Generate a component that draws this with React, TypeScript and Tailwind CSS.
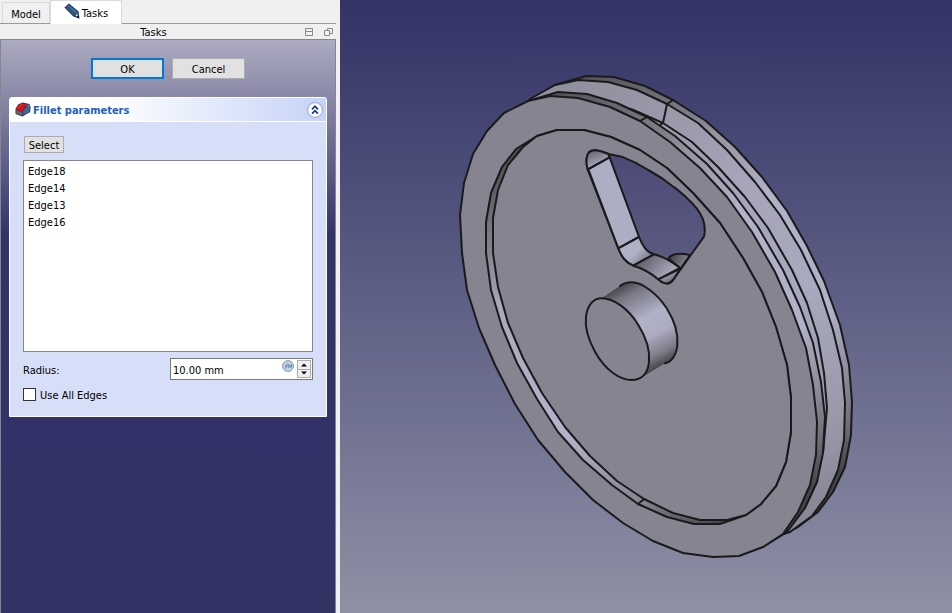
import { useState } from "react";

const EDGES = ["Edge18", "Edge14", "Edge13", "Edge16"];

function PencilIcon() {
  return (
    <svg viewBox="0 0 16 16" className="mb-1 h-4 w-4" aria-hidden="true">
      <path d="M0.4 4.6 L5 0.4 L14.6 8.6 L15.4 15.4 L9.4 13.4 Z" fill="#1f3752" />
      <path d="M1.4 4.7 L5 1.4 L13.8 9 L9.8 12.6 Z" fill="#2f567f" />
      <path d="M4.4 2.8 L12.4 9.6" stroke="#456f9b" strokeWidth="1.4" />
      <path d="M11 12.4 L13.4 10.2 L14 12.6 L12.8 13.6 Z" fill="#b4bfc9" />
      <path d="M12.4 14.2 L14.5 12.4 L15.4 15.4 Z" fill="#111c2b" />
    </svg>
  );
}

function FilletIcon() {
  return (
    <svg viewBox="0 0 16 15" className="h-[15px] w-4" aria-hidden="true">
      <path d="M0.5 7 L3 2.5 L7.5 0.5 L14.4 2 L15.6 5 L15.2 10 L7.5 14.5 L0.5 12 Z" fill="#26364c" />
      <path d="M8.2 9 L10.5 5.4 L14.8 3.8 L14.6 9.6 L8.2 13.4 Z" fill="#3c6693" />
      <path d="M11 4.6 L13 2.6 L14.6 3.2 L14.8 4.2 Z" fill="#5587b5" />
      <path d="M1.2 8.6 L7.4 10 L7.4 13.6 L1.2 11.6 Z" fill="#6a6468" />
      <path d="M0.9 8 Q1.8 3.2 6.5 1.4 L13 2.3 Q9.4 4.3 7.9 9.6 Z" fill="#cf161d" />
      <path d="M3 6 Q4.5 3.2 8 2.2" stroke="#e8363c" strokeWidth="1" fill="none" />
    </svg>
  );
}

function CollapseIcon() {
  return (
    <svg viewBox="0 0 18 18" className="h-[18px] w-[18px]" aria-hidden="true">
      <circle cx="9" cy="9" r="7.5" fill="#fdfdff" stroke="#b4b7dc" strokeWidth="1.5" />
      <path d="M6 8.3 L9 5.3 L12 8.3 M6 12.6 L9 9.6 L12 12.6" fill="none" stroke="#173b91" strokeWidth="1.7" />
    </svg>
  );
}

// Shaded model of the pulley wheel
function WheelView() {
  return (
    <svg
      viewBox="340 0 612 613"
      className="h-full w-full"
      role="img"
      aria-label="3D view of the wheel"
      strokeLinejoin="round"
      strokeLinecap="round"
    >
      <defs>
        {/* backdrop as seen through the hole */}
        <linearGradient id="sky" gradientUnits="userSpaceOnUse" x1="0" y1="-420" x2="0" y2="1419">
          <stop offset="0" stopColor="#333366" />
          <stop offset="1" stopColor="#9090a5" />
        </linearGradient>
        <linearGradient id="band" gradientUnits="userSpaceOnUse" x1="540" y1="80" x2="800" y2="530">
          <stop offset="0" stopColor="#8e8d9a" />
          <stop offset="0.35" stopColor="#a5a4b8" />
          <stop offset="0.6" stopColor="#a9a9bf" />
          <stop offset="0.85" stopColor="#9a99aa" />
          <stop offset="1" stopColor="#858491" />
        </linearGradient>
        <linearGradient id="chamfer" gradientUnits="userSpaceOnUse" x1="560" y1="70" x2="810" y2="530">
          <stop offset="0" stopColor="#4b4b50" />
          <stop offset="0.2" stopColor="#7f7e8a" />
          <stop offset="0.25" stopColor="#95949f" />
          <stop offset="0.4" stopColor="#b1b1c8" />
          <stop offset="0.65" stopColor="#b1b1c8" />
          <stop offset="0.85" stopColor="#73727c" />
          <stop offset="0.93" stopColor="#44444a" />
        </linearGradient>
        <linearGradient id="groove" gradientUnits="userSpaceOnUse" x1="510" y1="140" x2="720" y2="525">
          <stop offset="0" stopColor="#45454a" />
          <stop offset="0.15" stopColor="#74737e" />
          <stop offset="0.32" stopColor="#a9a8bd" />
          <stop offset="0.65" stopColor="#b3b3ca" />
          <stop offset="0.87" stopColor="#85848f" />
          <stop offset="1" stopColor="#45454a" />
        </linearGradient>
        <linearGradient id="hub" gradientUnits="userSpaceOnUse" x1="140" y1="45" x2="275" y2="295">
          <stop offset="0" stopColor="#3c3c40" />
          <stop offset="0.15" stopColor="#777682" />
          <stop offset="0.45" stopColor="#b1b1c8" />
          <stop offset="0.65" stopColor="#acabc1" />
          <stop offset="0.85" stopColor="#7d7c88" />
          <stop offset="1" stopColor="#3c3c40" />
        </linearGradient>
        <linearGradient id="cornerTop" gradientUnits="userSpaceOnUse" x1="70" y1="25" x2="90" y2="80">
          <stop offset="0" stopColor="#5f5e66" />
          <stop offset="1" stopColor="#b0b0c6" />
        </linearGradient>
        <linearGradient id="cornerLow" gradientUnits="userSpaceOnUse" x1="165" y1="310" x2="225" y2="375">
          <stop offset="0" stopColor="#b0b0c6" />
          <stop offset="0.5" stopColor="#b0b0c6" />
          <stop offset="1" stopColor="#73727c" />
        </linearGradient>
        <linearGradient id="ledge" gradientUnits="userSpaceOnUse" x1="225" y1="350" x2="285" y2="405">
          <stop offset="0" stopColor="#63626b" />
          <stop offset="1" stopColor="#a3a2b5" />
        </linearGradient>
        <linearGradient id="tip" gradientUnits="userSpaceOnUse" x1="290" y1="395" x2="310" y2="435">
          <stop offset="0" stopColor="#aeadc3" />
          <stop offset="1" stopColor="#5a5a61" />
        </linearGradient>
        <linearGradient id="shade" gradientUnits="userSpaceOnUse" x1="300" y1="345" x2="350" y2="375">
          <stop offset="0" stopColor="#3c3c40" />
          <stop offset="1" stopColor="#8c8b98" />
        </linearGradient>
      </defs>

      <g stroke="#1a1a1c" strokeWidth="2">
        {/* back rim */}
        <path
          d="M528 101 L555 85 L586 76 L614 77 L645 86 L673 100 L706 121 L735 147 L762 177 L787 211 L807 246 L824 281 L840 325 L849 365 L852 402 L851 435 L845 467 L833 492 L818 512 L798 527 L783 534 L700 400 Z"
          fill="url(#chamfer)"
        />
        {/* running surface */}
        <path
          d="M530 99 L555 85 L578 80 L608 82 L637 90 L667 104 L698 123 L727 150 L755 182 L780 215 L801 250 L820 290 L833 330 L842 368 L845 403 L844 440 L838 470 L826 497 L812 516 L790 532 L783 534 L700 400 Z"
          fill="url(#band)"
        />
        {/* front chamfer */}
        <path
          d="M528 101 L558 92 L587 94 L617 103 L647 117 L675 136 L707 164 L733 193 L758 227 L783 270 L800 307 L813 343 L821 382 L825 417 L823 453 L817 482 L805 508 L787 532 L763 547 L650 350 Z"
          fill="url(#chamfer)"
        />
        <path d="M631 109 L663 123 L692 142 L718 167 L745 197 L768 228 L792 270 L807 303 L818 338 L824 373 L827 408 L823 453" fill="none" />
        <path d="M673 100 L667 104 L663 123 L660 125 M647 117 L640 121" fill="none" />

        {/* front face */}
        <path
          d="M528 101 L550 96 L578 98 L610 107 L640 121 L670 142 L700 168 L727 197 L752 232 L775 272 L792 310 L806 348 L813 385 L817 422 L816 455 L810 485 L798 512 L783 534 L763 547 L739 556 L713 557 L683 553 L653 541 L623 523 L593 500 L565 472 L538 440 L515 404 L495 365 L479 328 L467 290 L462 253 L460 215 L464 183 L473 154 L487 131 L504 113 Z"
          fill="#868491"
        />
        {/* groove and web */}
        <path
          d="M557 130 L584 130 L611 137 L640 150 L667 168 L693 193 L720 223 L743 258 L762 292 L776 327 L787 365 L791 398 L791 432 L786 462 L776 486 L761 504 L746 515 L720 524 L694 524 L667 517 L638 504 L612 485 L583 460 L558 432 L537 399 L517 363 L502 327 L491 290 L486 253 L486 222 L491 193 L502 167 L516 149 L537 136 Z"
          fill="url(#groove)"
        />
        <path
          d="M557 130 L584 130 L611 137 L640 150 L667 168 L693 193 L720 223 L743 258 L762 292 L776 327 L787 365 L791 398 L791 432 L786 462 L776 486 L761 504 L746 515 L727 520 L700 520 L673 513 L644 499 L617 481 L590 456 L565 427 L542 393 L523 358 L508 323 L498 287 L493 253 L493 218 L498 190 L508 165 L523 147 L537 136 Z"
          fill="#868491"
        />
        <path d="M638 504 L644 499" />
      </g>

      {/* lightening hole, drawn at three times its size */}
      <g transform="translate(570 140) scale(0.33333)" stroke="#1a1a1c" strokeWidth="6">
        <path
          d="M53 88 C46 60 48 32 73 31 C90 32 105 38 115 42 L155 50 Q195 65 235 90 Q275 112 310 140 Q350 170 380 205 C398 228 410 255 402 290 L310 418 C300 433 285 436 265 418 Q230 388 190 375 C165 365 155 350 145 325 Z"
          fill="url(#sky)"
        />
        <path d="M53 88 C46 60 48 32 73 31 C90 32 105 38 115 42 L119 52 Z" fill="url(#cornerTop)" />
        <path d="M55 88 L119 52 L207 291 L145 325 Z" fill="#adadc3" />
        <path d="M145 325 L207 291 C217 316 228 336 252 343 L190 377 C165 366 155 350 145 325 Z" fill="url(#cornerLow)" />
        <path d="M295 355 C305 341 330 338 360 345 L332 386 Z" fill="url(#shade)" />
        <path d="M252 343 Q285 350 330 384 L265 418 Q230 388 190 377 Z" fill="url(#ledge)" />
        <path d="M332 386 L265 418 C285 436 300 433 310 418 Z" fill="url(#tip)" />
      </g>

      {/* hub */}
      <g transform="translate(570 270) scale(0.33333)" stroke="#1a1a1c" strokeWidth="6">
        <path
          d="M95 85 L150 48 C160 40 170 37 185 37 C215 37 260 68 290 115 C315 155 325 195 322 225 C319 255 305 277 285 280 L222 318 Z"
          fill="url(#hub)"
          stroke="none"
        />
        <path
          d="M150 48 C160 40 170 37 185 37 C215 37 260 68 290 115 C315 155 325 195 322 225 C319 255 305 277 285 280"
          fill="none"
        />
        <path
          d="M95 85 C130 85 175 115 205 165 C230 205 240 245 237 275 C234 310 215 330 185 330 C150 330 105 300 75 245 C50 200 45 165 48 140 C52 105 70 85 95 85 Z"
          fill="#868491"
        />
      </g>
    </svg>
  );
}

function TaskPanel() {
  const [radius, setRadius] = useState("10.00 mm");
  const [allEdges, setAllEdges] = useState(false);

  // Step the radius while keeping the unit
  const step = (delta: number) => {
    const value = Math.max(0, (parseFloat(radius) || 0) + delta);
    setRadius(`${value.toFixed(2)} mm`);
  };

  return (
    <section className="rounded-t-[3px] border border-white bg-[#d6dff7]">
      <header className="flex h-6 items-center justify-between rounded-t-[2px] border-b border-white bg-linear-to-r from-white from-30% to-[#c6d3f7] pr-[2px] pl-[5px]">
        <h2 className="flex items-center gap-[2px] font-bold text-[#215dc6]">
          <FilletIcon />
          <span className="pt-px">Fillet parameters</span>
        </h2>
        <button type="button" aria-label="Collapse">
          <CollapseIcon />
        </button>
      </header>

      <div className="flex flex-col px-[13px] pt-[14px] pb-[15px]">
        <button
          type="button"
          className="ml-px h-[17px] w-10 self-start border border-[#adadad] bg-[#e1e1e1] leading-[17px]"
        >
          Select
        </button>
        <ul className="mt-[7px] h-48 border border-[#828790] bg-white px-1 pt-[2px] leading-[17px]">
          {EDGES.map((edge) => (
            <li key={edge}>{edge}</li>
          ))}
        </ul>

        <div className="mt-[6px] flex items-center justify-between">
          <label htmlFor="radius" className="pt-[2px]">Radius:</label>
          <div className="flex h-[22px] w-[143px] border border-[#7a7a7a] bg-white p-px">
            <input
              id="radius"
              className="min-w-0 flex-1 pt-[2px] pl-[1px] outline-none"
              value={radius}
              onChange={(e) => setRadius(e.target.value)}
            />
            <button type="button" aria-label="Expression" className="mr-[3px] self-start">
              <svg viewBox="0 0 12 12" className="block h-3 w-3" aria-hidden="true">
                <circle cx="6" cy="6" r="5.4" fill="#c3d3e3" stroke="#7f97b1" strokeWidth="1" />
                <path
                  d="M3 8.4 Q4 8.4 4.2 6.5 Q4.4 3.8 5.6 3.8 M3.4 5.8 H5.2 M6.6 4 Q5.6 6 6.4 8 M7 5 L8.6 7.4 M8.6 5 L7 7.4 M9.2 4 Q10 6 9 8"
                  fill="none"
                  stroke="#5a7ba3"
                  strokeWidth="0.8"
                />
              </svg>
            </button>
            <div className="flex w-[14px] flex-col">
              <button
                type="button"
                aria-label="Increase"
                onClick={() => step(1)}
                className="flex flex-1 items-center justify-center border border-b-0 border-[#acacac] bg-[#f0f0f0]"
              >
                <svg viewBox="0 0 6 4" className="h-1 w-[6px]" aria-hidden="true">
                  <path d="M0 3.5 L3 0.5 L6 3.5 Z" />
                </svg>
              </button>
              <button
                type="button"
                aria-label="Decrease"
                onClick={() => step(-1)}
                className="flex flex-1 items-center justify-center border border-[#acacac] bg-[#f0f0f0]"
              >
                <svg viewBox="0 0 6 4" className="h-1 w-[6px]" aria-hidden="true">
                  <path d="M0 0.5 L3 3.5 L6 0.5 Z" />
                </svg>
              </button>
            </div>
          </div>
        </div>

        <label className="mt-2 flex h-[13px] items-center gap-1">
          <input
            type="checkbox"
            checked={allEdges}
            onChange={(e) => setAllEdges(e.target.checked)}
            className="h-[13px] w-[13px] appearance-none border border-[#333333] bg-white checked:bg-[#0078d7]"
          />
          <span className="pt-[2px]">Use All Edges</span>
        </label>
      </div>
    </section>
  );
}

export default function App() {
  return (
    <div className="flex min-h-screen bg-[#f0f0f0] font-[DejaVu_Sans_Condensed,Tahoma,sans-serif] text-[11px] leading-[15px] text-black">
      <aside className="flex w-[336px] shrink-0 flex-col">
        <nav className="flex h-6 items-end border-b border-[#9a9a9a] pl-[2px]">
          <button type="button" className="h-[21px] w-12 border border-b-0 border-[#d9d9d9] bg-[#f0f0f0] pt-[2px]">
            Model
          </button>
          <button
            type="button"
            className="-mb-px flex h-6 w-[72px] items-center justify-center gap-[2px] border border-b-0 border-[#d9d9d9] bg-white"
          >
            <PencilIcon />
            <span className="pt-[2px]">Tasks</span>
          </button>
        </nav>

        <div className="flex h-[15px] items-center pr-[3px]">
          <h1 className="flex-1 pt-[2px] pl-[2px] text-center">Tasks</h1>
          <div className="flex gap-[10px]">
            <button type="button" aria-label="Dock">
              <svg viewBox="0 0 9 9" className="h-[9px] w-[9px]" fill="none" stroke="#8a8a8a" aria-hidden="true">
                <path d="M0.5 1.5 H7.5 V8.5 H0.5 Z M0.5 4.5 H7.5" />
              </svg>
            </button>
            <button type="button" aria-label="Float">
              <svg viewBox="0 0 9 9" className="h-[9px] w-[9px]" fill="none" stroke="#8a8a8a" aria-hidden="true">
                <path d="M3.5 3.5 V1.5 H8.5 V6.5 H5.5 M0.5 3.5 H5.5 V8.5 H0.5 Z" />
              </svg>
            </button>
          </div>
        </div>

        <div className="flex-1 border border-b-0 border-[#828790] bg-[linear-gradient(#acabc1,#8886a5_60px,#33316a_195px,#333366)] px-2 pt-[18px]">
          <div className="mb-[18px] flex justify-center gap-2">
            <button type="button" className="h-[21px] w-[73px] border-2 border-[#0078d7] bg-[#e1e1e1] pt-[2px]">
              OK
            </button>
            <button type="button" className="h-[21px] w-[73px] border border-[#adadad] bg-[#e1e1e1] pt-[2px]">
              Cancel
            </button>
          </div>
          <TaskPanel />
        </div>
      </aside>

      <main className="ml-1 flex min-w-0 flex-1 bg-linear-to-b from-[#333366] to-[#9090a5]">
        <WheelView />
      </main>
    </div>
  );
}
